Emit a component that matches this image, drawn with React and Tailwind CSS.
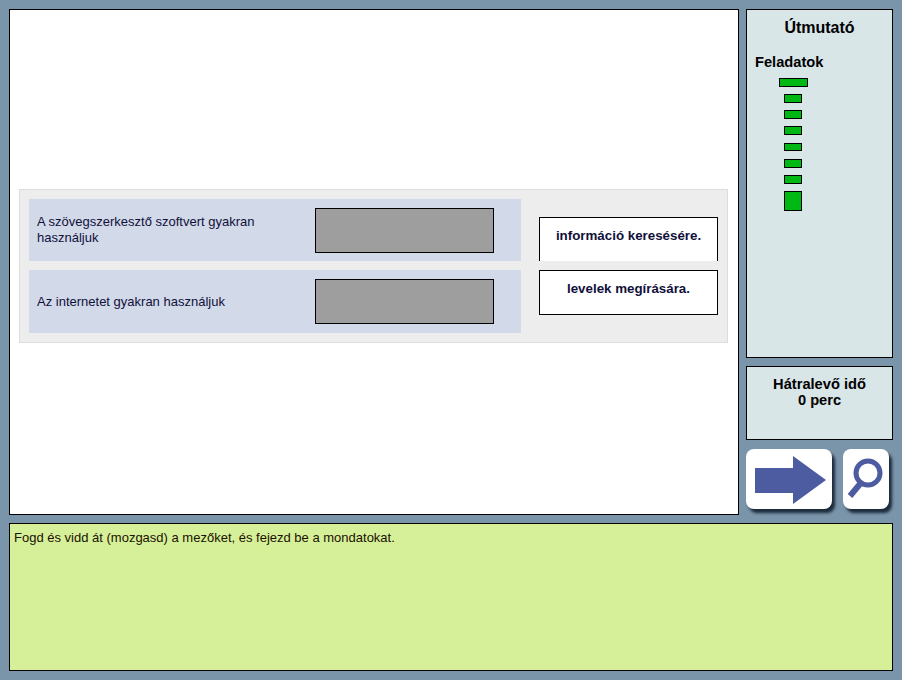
const bars = [
  "ml-[23px] w-[29px] h-[9px]",
  "ml-[28px] w-[18px] h-[9px]",
  "ml-[28px] w-[18px] h-[9px]",
  "ml-[28px] w-[18px] h-[9px]",
  "ml-[28px] w-[18px] h-[8px] mt-px mb-px",
  "ml-[28px] w-[18px] h-[9px]",
  "ml-[28px] w-[18px] h-[9px]",
  "ml-[28px] w-[18px] h-[20px]",
];

function MatchRow({ text, className }) {
  return (
    <div className={`flex items-center justify-between bg-[#d2d9e9] pl-2 pr-[27px] ${className}`}>
      <p className="w-[250px] text-[13px] leading-[16px] text-[#10103a]">{text}</p>
      <div className="w-[179px] h-[45px] bg-[#9e9e9e] border border-black" />
    </div>
  );
}

function App() {
  return (
    <div className="w-[902px] h-[680px] bg-[#7a94a9] p-[9px] flex flex-col gap-2 font-['Liberation_Sans',Arial,sans-serif] text-black overflow-hidden">
      <div className="flex gap-[7px] h-[506px]">
        {/* main area */}
        <div className="w-[730px] bg-white border border-black pt-[179px] px-[9px]">
          <div className="w-[709px] h-[154px] bg-[#ededed] border border-[#dcdcdc] p-[9px] flex">
            <div className="w-[492px] flex flex-col gap-[9px]">
              <MatchRow className="h-[62px]" text="A szövegszerkesztő szoftvert gyakran használjuk" />
              <MatchRow className="h-[63px]" text="Az internetet gyakran használjuk" />
            </div>
            <div className="ml-[18px] w-[179px] pt-[18px] flex flex-col gap-[9px]">
              <div className="h-[44px] bg-white border border-b-0 border-black pt-[10px] text-center text-[13.33px] font-bold leading-[16px] text-[#10103a]">
                információ keresésére.
              </div>
              <div className="h-[45px] bg-white border border-black pt-[10px] text-center text-[13.33px] font-bold leading-[16px] text-[#10103a]">
                levelek megírására.
              </div>
            </div>
          </div>
        </div>

        {/* right column */}
        <div className="w-[147px] flex flex-col">
          <div className="h-[349px] bg-[#d9e6e8] border border-black">
            <h2 className="mt-[9px] text-center text-[16px] font-bold leading-[18px]">Útmutató</h2>
            <h3 className="mt-[17px] ml-2 text-[14.67px] font-bold leading-[16px]">Feladatok</h3>
            <div className="mt-[8px] ml-[9px] flex flex-col gap-[7px]">
              {bars.map((b, i) => (
                <div key={i} className={`bg-[#00b814] border border-black ${b}`} />
              ))}
            </div>
          </div>
          <div className="mt-2 h-[74px] bg-[#d9e6e8] border border-black pt-[9px] text-center text-[14.67px] font-bold leading-[16px]">
            <p>Hátralevő idő</p>
            <p>0 perc</p>
          </div>
          <div className="mt-[9px] flex gap-[11px]">
            <button className="w-[86px] h-[60px] bg-white rounded-[8px] shadow-[3px_4px_3px_rgba(10,25,40,0.85)]">
              <svg width="86" height="60" viewBox="0 0 86 60">
                <path d="M9 19H47V7L80 31L47 55V44H9Z" fill="#4d5ca0" />
              </svg>
            </button>
            <button className="w-[46px] h-[60px] bg-white rounded-[8px] shadow-[3px_4px_3px_rgba(10,25,40,0.85)]">
              <svg width="46" height="60" viewBox="0 0 46 60">
                <circle cx="25" cy="24" r="12" fill="none" stroke="#4d5ca0" strokeWidth="5" />
                <path d="M17 35L7 47" fill="none" stroke="#4d5ca0" strokeWidth="6" />
              </svg>
            </button>
          </div>
        </div>
      </div>

      {/* instructions */}
      <div className="h-[148px] bg-[#d6f09a] border border-black px-1 pt-[6px] text-[13px] leading-[16px] text-[#201000]">
        Fogd és vidd át (mozgasd) a mezőket, és fejezd be a mondatokat.
      </div>
    </div>
  );
}

export default App;
